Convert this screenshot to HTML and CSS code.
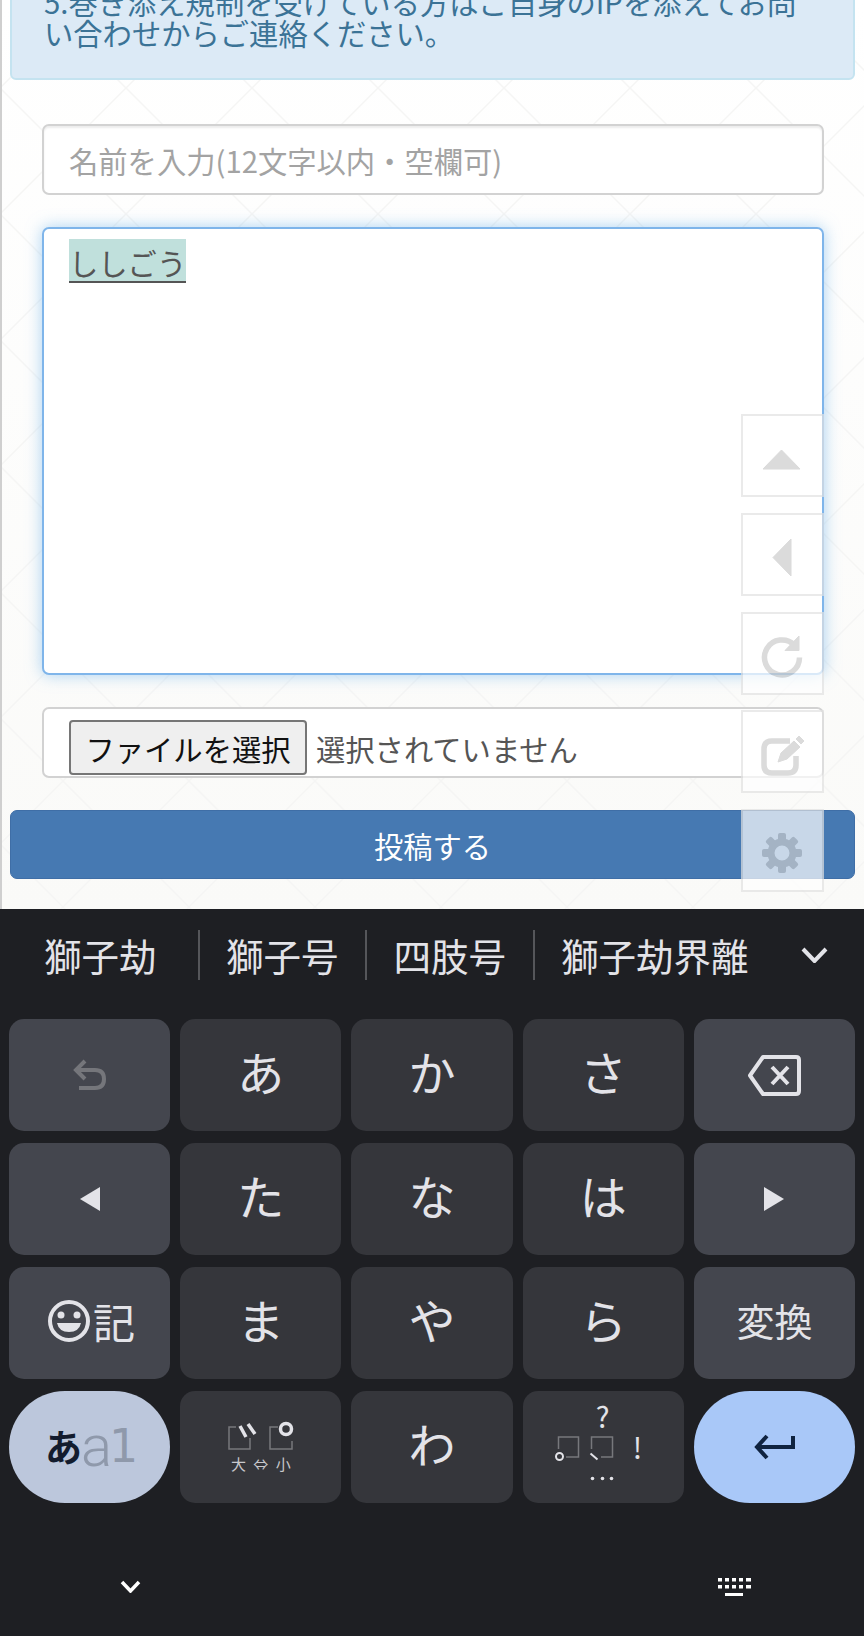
FILE: index.html
```html
<!DOCTYPE html>
<html lang="ja">
<head>
    <meta charset="UTF-8">
    <meta name="viewport" content="width=device-width, initial-scale=1.0">
    <title>投稿フォーム</title>
    <link rel="stylesheet" href="styles.css">
</head>
<body>

    <!-- Web page part -->
    <div class="page">
        <div class="notice">5.巻き添え規制を受けている方はご自身のIPを添えてお問い合わせからご連絡ください。</div>

        <form class="post-form">
            <input class="name-input" type="text" placeholder="名前を入力(12文字以内・空欄可)">
            <div class="body-input"><span class="composing">ししごう</span></div>
            <div class="file-input">
                <button class="file-button" type="button">ファイルを選択</button>
                <span class="file-label">選択されていません</span>
            </div>
        </form>

        <button class="submit-button" type="button">投稿する</button>

        <!-- Floating buttons -->
        <div class="float-buttons">
            <div class="float-button">
                <svg viewBox="0 0 79 79"><path d="M38.500 34 L57 53 H20 Z" class="float-icon"/></svg>
            </div>
            <div class="float-button">
                <svg viewBox="0 0 79 79"><path d="M48 24 V61 L30 42.500 Z" class="float-icon"/></svg>
            </div>
            <div class="float-button">
                <svg viewBox="0 0 79 79">
                    <path d="M51.400 31.100 A17.500 17.500 0 1 0 56.500 43.500" class="float-line"/>
                    <path d="M56 22 V36.500 H42 Z" class="float-icon"/>
                </svg>
            </div>
            <div class="float-button">
                <svg viewBox="0 0 79 79">
                    <path d="M47 29 H29 Q21 29 21 37 V53 Q21 61 29 61 H45 Q53 61 53 53 V44" class="float-line"/>
                    <path d="M35 50 L38 41 L51 29 L57 35 L44 47 Z M53 27 L56 24 L61 29 L58 32 Z" class="float-icon"/>
                </svg>
            </div>
            <div class="float-button">
                <svg viewBox="0 0 79 79">
                    <g transform="translate(39 42)" class="gear-teeth">
                        <rect x="-4" y="-20" width="8" height="40" rx="2"/>
                        <rect x="-4" y="-20" width="8" height="40" rx="2" transform="rotate(45)"/>
                        <rect x="-4" y="-20" width="8" height="40" rx="2" transform="rotate(90)"/>
                        <rect x="-4" y="-20" width="8" height="40" rx="2" transform="rotate(135)"/>
                    </g>
                    <circle cx="39" cy="42" r="11" class="gear-ring"/>
                </svg>
            </div>
        </div>
    </div>

    <!-- Keyboard -->
    <div class="keyboard">
        <div class="suggestions">
            <span class="suggestion first">獅子劫</span>
            <span class="suggestion">獅子号</span>
            <span class="suggestion">四肢号</span>
            <span class="suggestion last">獅子劫界離</span>
            <svg class="more-icon" viewBox="0 0 27 16"><path d="M2 2 L13.500 14 L25 2"/></svg>
        </div>

        <div class="keys">
            <div class="key func">
                <svg class="undo-icon" width="33" height="31" viewBox="0 0 33 31"><path d="M12 2 L3 11 L12 20 M3 11 H22 Q31 11 31 20 Q31 29 22 29 H6"/></svg>
            </div>
            <div class="key kana">あ</div>
            <div class="key kana">か</div>
            <div class="key kana">さ</div>
            <div class="key func">
                <svg class="line-icon back-icon" width="53" height="41" viewBox="0 0 53 41"><path d="M15 2 H48 Q51 2 51 5 V36 Q51 39 48 39 H15 L2 20.500 Z M24 12 L40 29 M40 12 L24 29"/></svg>
            </div>

            <div class="key func">
                <svg width="20" height="24" viewBox="0 0 20 24"><path class="fill-icon" d="M20 0 V24 L0 12 Z"/></svg>
            </div>
            <div class="key kana">た</div>
            <div class="key kana">な</div>
            <div class="key kana">は</div>
            <div class="key func">
                <svg width="20" height="24" viewBox="0 0 20 24"><path class="fill-icon" d="M0 0 V24 L20 12 Z"/></svg>
            </div>

            <div class="key func symbol-key">
                <svg width="42" height="42" viewBox="0 0 42 42">
                    <circle class="line-icon" cx="21" cy="21" r="19"/>
                    <circle class="fill-icon" cx="13" cy="15" r="3.500"/>
                    <circle class="fill-icon" cx="29" cy="15" r="3.500"/>
                    <path class="fill-icon" d="M9 23 H33 Q31 32 21 32 Q11 32 9 23 Z"/>
                </svg>
                <span>記</span>
            </div>
            <div class="key kana">ま</div>
            <div class="key kana">や</div>
            <div class="key kana">ら</div>
            <div class="key func convert-key">変換</div>

            <div class="key mode-key"><span class="mode-kana">あ</span><span class="mode-alpha">a</span><span class="mode-digit">1</span></div>
            <div class="key small-key">
                <svg width="66" height="26" viewBox="0 0 66 26">
                    <path class="box-line" d="M8 3 H1 V25 H22 V14 M22 25 H14"/>
                    <path class="box-line" d="M50 3 H42 V25 H64 V17 M64 25 H51"/>
                    <path class="mark-line" d="M12 2 L18 13 M20 0 L27 10"/>
                    <circle class="mark-line" cx="58" cy="5" r="5.500"/>
                </svg>
                <span class="small-label">大 ⇔ 小</span>
            </div>
            <div class="key kana">わ</div>
            <div class="key punct-key">
                <svg width="100" height="80" viewBox="0 0 100 80">
                    <text class="punct-text" x="49.500" y="21">?</text>
                    <path class="box-line" d="M5.500 42 V30 H25.500 V50 H13"/>
                    <path class="box-line" d="M38.500 42 V30 H59.500 V50 H48"/>
                    <circle class="mark-line thin" cx="6.500" cy="49.500" r="3.500"/>
                    <path class="mark-line thin" d="M37.500 46.500 L44.500 52.500"/>
                    <text class="punct-text" x="84.500" y="52">!</text>
                    <circle class="fill-icon" cx="39.500" cy="71.500" r="1.800"/>
                    <circle class="fill-icon" cx="49.500" cy="71.500" r="1.800"/>
                    <circle class="fill-icon" cx="58.500" cy="71.500" r="1.800"/>
                </svg>
            </div>
            <div class="key enter-key">
                <svg width="41" height="26" viewBox="0 0 41 26"><path d="M39 2 V13 H4 M13 2 L3 13 L13 24"/></svg>
            </div>
        </div>

        <div class="nav-bar">
            <svg class="nav-down" width="21" height="13" viewBox="0 0 21 13"><path d="M2 2 L10.500 11 L19 2"/></svg>
            <svg class="nav-keyboard" width="33" height="18" viewBox="0 0 33 18">
                <path d="M0 0h4v3.500h-4z M7 0h4v3.500h-4z M14 0h4v3.500h-4z M21 0h4v3.500h-4z M28 0h5v3.500h-5z M0 7h4v3.500h-4z M7 7h4v3.500h-4z M14 7h4v3.500h-4z M21 7h4v3.500h-4z M28 7h5v3.500h-5z M7 15h18v3h-18z"/>
            </svg>
        </div>
    </div>

</body>
</html>
```

FILE: styles.css
```css
* {
    box-sizing: border-box;
}

body {
    margin: 0;
    font-family: "Noto Sans CJK JP", "Noto Sans", sans-serif;
    background-color: #1e1f23;
}

/* Web page part */
.page {
    position: relative;
    height: 909px;
    overflow: hidden;
    border-left: 2px solid #cfcfcf;
    background-color: #fdfdfc;
    background-image:
        url("data:image/svg+xml,%3Csvg xmlns='http://www.w3.org/2000/svg' width='126' height='126'%3E%3Cpath d='M0 0 L126 126 M126 0 L0 126' fill='none' stroke='%23f5f5f4' stroke-width='1.5'/%3E%3C/svg%3E"),
        linear-gradient(#ffffff, #fafaf8);
    background-position: -2px 88px, 0 0;
    background-repeat: repeat, no-repeat;
}

.notice {
    margin: -36px 9px 0 8px;
    padding: 20px 30px 30px 32px;
    border: 2px solid #c4e3f0;
    border-radius: 6px;
    background-color: #dceaf6;
    color: #3b7396;
    font-size: 29.300px;
    line-height: 31px;
}

.post-form {
    display: flex;
    flex-direction: column;
    gap: 32px;
    margin: 44px 40px 0 40px;
}

.name-input {
    display: block;
    width: 100%;
    height: 71px;
    padding: 0 25px;
    border: 2px solid #d2d2d2;
    border-radius: 7px;
    background-color: #fff;
    box-shadow: inset 0 2px 2px rgba(0, 0, 0, 0.075);
    font-family: inherit;
    font-size: 29.300px;
    outline: none;
}

.name-input::placeholder {
    color: #a3a3a3;
}

.body-input {
    height: 448px;
    padding: 10px 25px;
    border: 2px solid #7fb5ea;
    border-radius: 7px;
    background-color: #fff;
    box-shadow: 0 0 16px rgba(102, 175, 233, 0.55);
    color: #555;
    font-size: 29.300px;
}

.composing {
    display: block;
    width: fit-content;
    height: 44px;
    padding-top: 3px;
    line-height: 41px;
    background-color: #c0e0dc;
    border-bottom: 2px solid #555;
}

.file-input {
    display: flex;
    align-items: flex-end;
    height: 71px;
    padding: 0 0 1px 25px;
    border: 2px solid #d2d2d2;
    border-radius: 7px;
    background-color: #fff;
    font-size: 29.300px;
}

.file-button {
    width: 238px;
    height: 55px;
    padding: 0;
    border: 2px solid #767676;
    border-radius: 4px;
    background-color: #efefef;
    color: #111;
    font-family: inherit;
    font-size: 29.300px;
}

.file-label {
    margin: 0 0 -1px 9px;
    color: #555;
    line-height: 55px;
}

.submit-button {
    display: block;
    width: 845px;
    height: 69px;
    margin: 32px 0 0 8px;
    border: 1px solid #3f6ea6;
    border-radius: 7px;
    background-color: #4679b2;
    color: #fff;
    font-family: inherit;
    font-size: 29.300px;
}

/* Floating buttons */
.float-buttons {
    position: absolute;
    top: 414px;
    left: 739px;
    display: flex;
    flex-direction: column;
    gap: 15.750px;
    opacity: 0.7;
}

.float-button {
    width: 83px;
    height: 83px;
    border: 2px solid #e2e2e2;
    background-color: #fff;
}

.float-button svg {
    display: block;
    width: 79px;
    height: 79px;
}

.float-icon {
    fill: #ccc;
    stroke: #ccc;
    stroke-width: 1;
    stroke-linejoin: round;
}

.float-line {
    fill: none;
    stroke: #ccc;
    stroke-width: 5.500;
}

.gear-teeth {
    fill: #ccc;
}

.gear-ring {
    fill: #fff;
    stroke: #ccc;
    stroke-width: 7;
}

/* Keyboard */
.keyboard {
    height: 727px;
    background-color: #1e1f23;
    color: #e3e3e8;
}

.suggestions {
    display: flex;
    align-items: flex-start;
    height: 110px;
    padding-top: 21px;
    font-size: 37.500px;
}

.suggestion {
    height: 50px;
    padding: 0 26.500px;
    border-right: 2px solid #55565a;
    line-height: 50px;
    white-space: nowrap;
}

.suggestion.first {
    padding-left: 44px;
    padding-right: 41px;
}

.suggestion.last {
    border-right: none;
}

.more-icon {
    width: 27px;
    height: 16px;
    margin: 17px 0 0 26px;
    fill: none;
    stroke: #e3e3e8;
    stroke-width: 4;
}

.keys {
    display: grid;
    grid-template-columns: repeat(5, 1fr);
    grid-auto-rows: 111.500px;
    gap: 12.500px 10px;
    padding: 0 9px;
}

.key {
    display: flex;
    align-items: center;
    justify-content: center;
    border-radius: 15px;
    background-color: #35363b;
}

.key.kana {
    padding-bottom: 8px;
    font-size: 47px;
}

.key.func {
    background-color: #44464e;
}

.undo-icon path {
    fill: none;
    stroke: #75767b;
    stroke-width: 4;
}

.line-icon,
.line-icon path {
    fill: none;
    stroke: #e3e3e8;
    stroke-width: 4;
    stroke-linejoin: round;
}

.back-icon {
    margin-top: 2px;
}

.fill-icon {
    fill: #e3e3e8;
}

.symbol-key {
    gap: 3px;
    padding: 0 0 4px 4px;
    font-size: 42px;
}

.convert-key {
    padding-bottom: 6px;
    font-size: 38px;
}

.key.mode-key {
    padding-bottom: 2px;
    border-radius: 56px;
    background-color: #bcc7dc;
}

.mode-kana {
    color: #131c2e;
    font-size: 37px;
    font-weight: 700;
}

.mode-alpha {
    margin-left: -1px;
    color: #8f99ab;
    font-family: "Roboto", sans-serif;
    font-size: 58px;
    font-weight: 300;
    line-height: 1;
}

.mode-digit {
    margin: 0 -4px 0 -3px;
    color: #8f99ab;
    font-family: "DejaVu Sans", sans-serif;
    font-size: 46px;
}

.small-key {
    flex-direction: column;
    gap: 4px;
    padding-top: 5px;
}

.small-key svg,
.punct-key svg {
    overflow: visible;
}

.box-line {
    fill: none;
    stroke: #77787c;
    stroke-width: 1.500;
}

.mark-line {
    fill: none;
    stroke: #e3e3e8;
    stroke-width: 3.500;
}

.mark-line.thin {
    stroke-width: 2;
}

.small-label {
    color: #c8c8cc;
    font-size: 15px;
    line-height: 20px;
    word-spacing: 4px;
}

.punct-text {
    fill: #e3e3e8;
    font-size: 29px;
    text-anchor: middle;
}

.key.enter-key {
    border-radius: 56px;
    background-color: #a9c8f8;
}

.enter-key path {
    fill: none;
    stroke: #0f2340;
    stroke-width: 4;
}

.nav-bar {
    display: flex;
    align-items: center;
    justify-content: space-between;
    height: 134px;
    padding: 34px 113px 0 120px;
}

.nav-down path {
    fill: none;
    stroke: #fff;
    stroke-width: 3.500;
}

.nav-keyboard path {
    fill: #fff;
}
```
